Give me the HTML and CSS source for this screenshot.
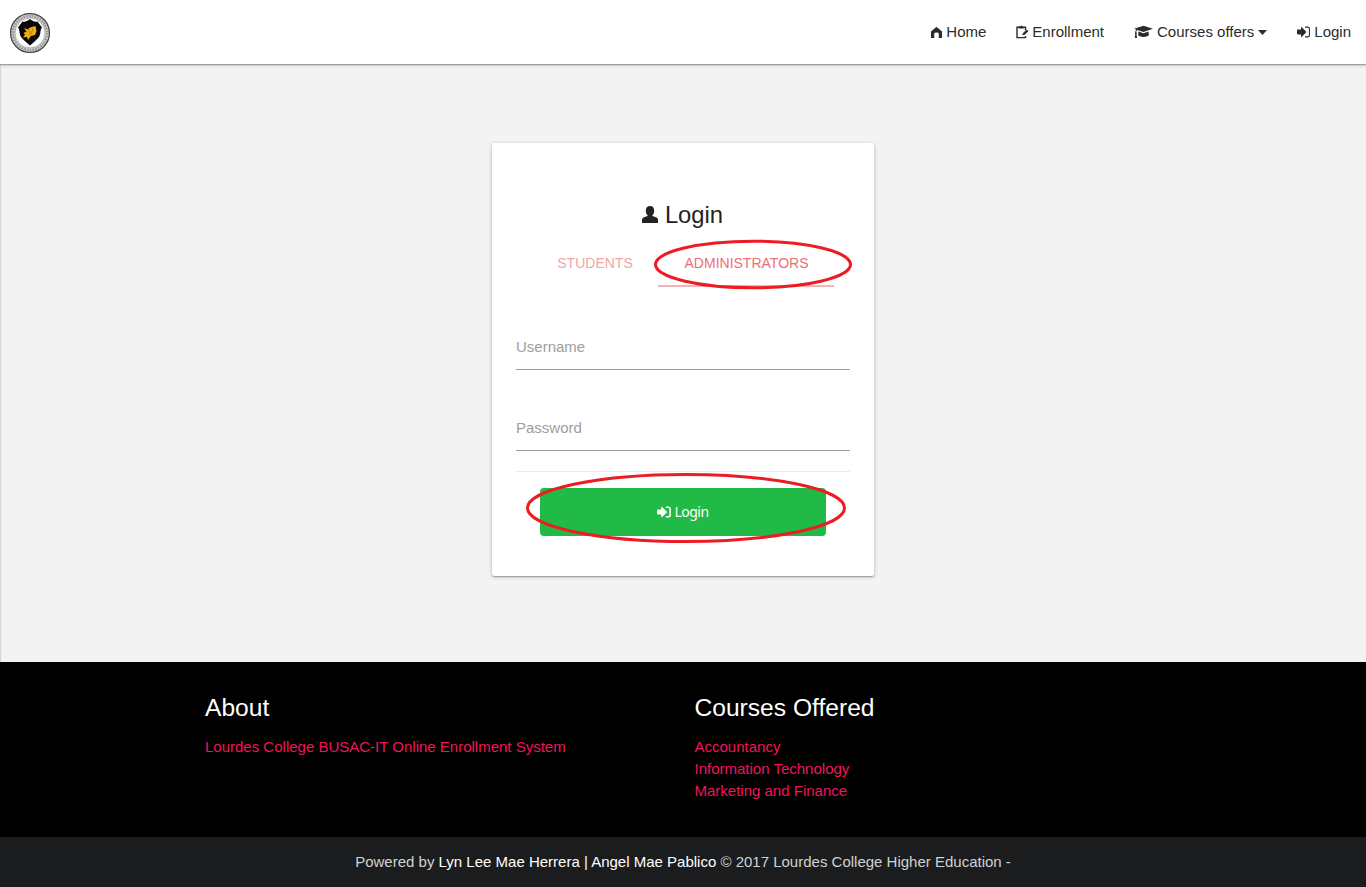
FILE: index.html
```html
<!DOCTYPE html>
<html lang="en">
<head>
<meta charset="utf-8">
<title>Login</title>
<link rel="stylesheet" href="styles.css">
</head>
<body>
<header class="nav">
  <a class="logo" href="#">
    <svg width="42" height="42" viewBox="0 0 42 42">
      <circle cx="21" cy="21" r="19.4" fill="#d4d4d4" stroke="#444" stroke-width="1.300"/>
      <circle cx="21" cy="21" r="17" fill="none" stroke="#999" stroke-width="2.500" stroke-dasharray="1.800 1"/>
      <circle cx="21" cy="21" r="15" fill="#fff" stroke="#888" stroke-width=".6"/>
      <path d="M21 7c3 2.500 5 3 7.500 2.500L33 15.500c-2 2-1 5-2.500 8.500-1.500 3-5.500 6-9.500 9.500-4-3.500-8-6.500-9.500-9.500C10 20.500 11 17.500 9 15.500l4.500-6C16 10 18 9.500 21 7z" fill="#080808"/>
      <path d="M15 16l4 1.500 2-2 5.500-1.500 1 5-1.500 4-4 1-3 4-1-3-4 .5 2-3-1.500-1.500 3-1.500z" fill="#efad0b"/>
      <path d="M20 18l1 4M24 17l-3 7" stroke="#a77506" stroke-width=".7"/>
    </svg>
  </a>
  <nav class="links">
    <a href="#"><svg class="i-home" width="11" height="11" viewBox="0 0 11 11"><path d="M0 11V4.500L4.700.4Q5.500-.2 6.300.4L11 4.500V11H7.800V6.800Q7.800 5.500 5.500 5.500T3.200 6.800V11z" fill="currentColor"/></svg>Home</a>
    <a href="#"><svg class="i-edit" width="13" height="14" viewBox="0 0 13 14"><path d="M3 2.200H1V12.600h8.500V11M8 2.200h1.500V5" fill="none" stroke="currentColor" stroke-width="1.400"/><path d="M2.800 1.300h1.600Q5.300-.4 6.200 1.300h1.700v2.200H2.800zM6.300 10.200l.5-2 3.900-3.700 1.700 1.700-4 3.700z" fill="currentColor"/></svg>Enrollment</a>
    <a href="#"><svg class="i-cap" width="19" height="14" viewBox="0 0 19 14"><path d="M9.500.7L19 3.800 9.500 7 3.200 4.900C2.400 5.600 2.300 6.500 2.300 7.300c.8.500.7 1.200.2 1.600L3 13H.8l.5-4.100c-.6-.5-.5-1.200.1-1.600 0-.9.200-2 .8-2.800L0 3.800z" fill="currentColor"/><path d="M4.500 6.500l5 1.700 5-1.700.3 3.300c0 2.800-10.600 2.800-10.600 0z" fill="currentColor"/></svg>Courses offers<svg class="i-caret" width="9" height="5" viewBox="0 0 9 5"><path d="M0 0h9L4.500 5z" fill="currentColor"/></svg></a>
    <a href="#"><svg class="i-login" width="13" height="12" viewBox="0 0 13 12"><path d="M.8 3.600H4V1.500q0-.9.800-.2L9 5.600q.4.400 0 .8L4.800 10.700q-.8.700-.8-.2V8.400H.8Q0 8.400 0 7.600V4.400q0-.8.800-.8z" fill="currentColor"/><path d="M8 1.100h2.700q1.700 0 1.700 1.700v6.400q0 1.700-1.700 1.700H8" fill="none" stroke="currentColor" stroke-width="1.100"/></svg>Login</a>
  </nav>
</header>
<main class="main">
  <form class="card">
    <h1 class="title"><svg width="16" height="18" viewBox="0 0 16 18"><path d="M8 0c2.700 0 4.200 2 4.200 4.700 0 2-.8 3.700-1.800 4.600v.7l3.600 1.300c1.500.6 2 1.500 2 2.800V17H0v-2.900c0-1.300.5-2.200 2-2.800L5.600 10v-.7C4.600 8.400 3.800 6.700 3.800 4.700 3.800 2 5.300 0 8 0z" fill="currentColor"/></svg>Login</h1>
    <div class="tabs">
      <a class="tab" href="#">STUDENTS</a>
      <a class="tab active" href="#">ADMINISTRATORS
        <svg class="ring ring-tab" width="200" height="52" viewBox="0 0 200 52"><ellipse cx="100" cy="25.500" rx="97.500" ry="23.300"/></svg>
      </a>
    </div>
    <div class="field">Username</div>
    <div class="field field-last">Password</div>
    <div class="divider"></div>
    <div class="submit"><svg width="14" height="12" viewBox="0 0 14 12"><path d="M.8 3.500h3.500V1.400q0-1 .9-.3L9.700 5.500q.5.500 0 1L5.200 10.900q-.9.700-.9-.3V8.500H.8Q0 8.500 0 7.700V4.300q0-.8.800-.8z" fill="currentColor"/><path d="M8.800 1.200h2.400q1.900 0 1.900 1.900v5.800q0 1.900-1.900 1.900H8.800" fill="none" stroke="currentColor" stroke-width="1.500"/></svg>Login
      <svg class="ring ring-submit" width="322" height="72" viewBox="0 0 322 72"><ellipse cx="161" cy="36" rx="158.500" ry="33.500"/></svg>
    </div>
  </form>
</main>
<footer>
  <div class="footer">
    <section class="col">
      <h2>About</h2>
      <a href="#">Lourdes College BUSAC-IT Online Enrollment System</a>
    </section>
    <section class="col">
      <h2>Courses Offered</h2>
      <a href="#">Accountancy</a>
      <a href="#">Information Technology</a>
      <a href="#">Marketing and Finance</a>
    </section>
  </div>
  <div class="copyright"><p>Powered by <b>Lyn Lee Mae Herrera</b> <b>|</b> <b>Angel Mae Pablico</b> © 2017 Lourdes College Higher Education -</p></div>
</footer>
</body>
</html>
```
FILE: styles.css
```css
* { box-sizing: border-box; }
body { margin: 0; background: #f3f3f3; font: 15px/22px "Liberation Sans", Arial, sans-serif; color: #222; }
a { color: inherit; text-decoration: none; }
h1, h2, p { margin: 0; font-weight: 400; }
svg { flex: none; }
.nav { position: relative; display: flex; justify-content: space-between; height: 64px; background: #fff; box-shadow: 0 1px 1px rgba(0,0,0,.25), 0 1px 4px rgba(0,0,0,.22); }
.logo { padding: 12px 0 0 9px; }
.links { display: flex; }
.links a { display: flex; align-items: center; height: 64px; padding: 0 15px; color: #2b2b2b; white-space: nowrap; }
.i-home { margin-right: 4px; }
.i-edit { margin-right: 3px; }
.i-cap { margin-right: 4px; }
.i-caret { margin-left: 4px; }
.i-login { margin-right: 4px; }
.main { height: 598px; padding-top: 79px; box-shadow: inset 1px 0 1px rgba(0,0,0,.13); }
.card { width: 382px; height: 433px; margin: 0 auto; padding: 54px 24px 0; background: #fff; border-radius: 2px; box-shadow: 0 1px 1px rgba(0,0,0,.25), 0 1px 4px rgba(0,0,0,.22); }
.title { display: flex; align-items: center; justify-content: center; gap: 7px; height: 36px; padding-right: 1px; font-size: 23.8px; line-height: 36px; }
.tabs { display: flex; height: 54px; padding: 0 16px; }
.tab { position: relative; width: 126px; line-height: 60px; font-size: 14px; text-align: center; color: #f4a3a6; }
.tab.active { width: 176px; flex: none; padding-left: 1px; color: #ee6e73; border-bottom: 2px solid #f6b2b5; }
.ring { position: absolute; overflow: visible; }
.ring ellipse { fill: none; stroke: #ed1c24; stroke-width: 3; }
.ring-tab { left: -5px; top: 6px; }
.field { height: 46px; margin-top: 37px; padding-top: 12px; border-bottom: 1px solid #9e9e9e; color: #9e9e9e; }
.field-last { margin-top: 35px; }
.divider { height: 1px; margin-top: 20px; background: #eaeaea; }
.submit { position: relative; display: flex; align-items: center; justify-content: center; gap: 3px; height: 48px; margin: 16px 24px 0; background: #22ba46; border-radius: 4px; color: #fff; font: 14px/20px "Noto Sans", sans-serif; letter-spacing: -.5px; }
.ring-submit { left: -15px; top: -16px; }
.footer { display: flex; height: 175px; padding: 28px 193px 0; background: #000; }
.col { width: 489.5px; padding-left: 12px; }
.col h2 { height: 46px; font-size: 24.6px; line-height: 36px; color: #fff; }
.col a { display: block; color: #f0145a; }
.copyright { height: 50px; background: #1b1c1d; color: #d2d2d2; text-align: center; line-height: 50px; }
.copyright b { font-weight: 400; color: #fff; }
```
